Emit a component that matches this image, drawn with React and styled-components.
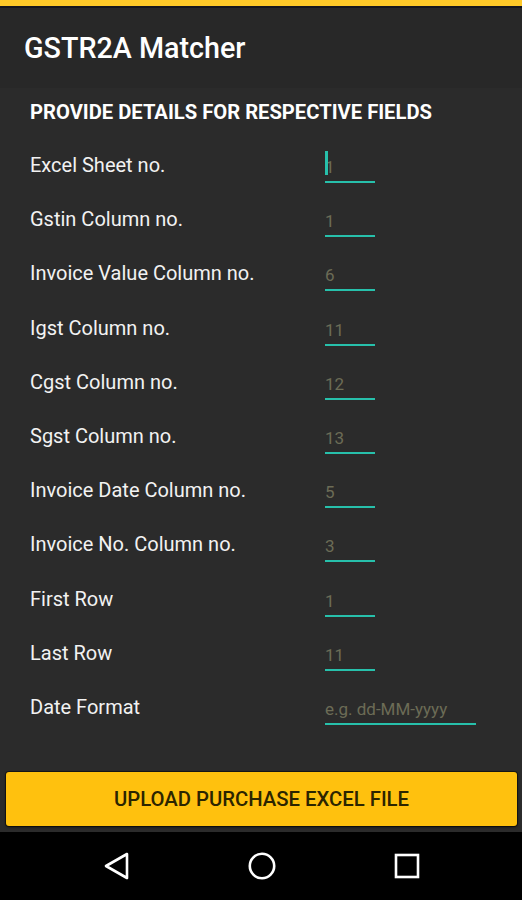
import React from "react";
import styled, { createGlobalStyle } from "styled-components";

const Global = createGlobalStyle`
  html, body { margin: 0; padding: 0; background: #2b2b2b; }
  * { box-sizing: border-box; }
  body { font-family: Roboto, "Noto Sans", "Liberation Sans", sans-serif; }
`;

const Screen = styled.div`
  width: 522px;
  height: 900px;
  display: flex;
  flex-direction: column;
  background: #2b2b2b;
  overflow: hidden;
`;

const StatusBar = styled.div`
  height: 8px;
  flex: none;
  background: #ffc928;
  border-bottom: 2px solid #16161c;
`;

const AppBar = styled.header`
  height: 80px;
  flex: none;
  display: flex;
  align-items: center;
  padding-left: 24px;
  background: #282828;
`;

const Title = styled.h1`
  margin: 0;
  font-size: 28.7px;
  font-weight: 500;
  color: #ffffff;
  letter-spacing: 0;
`;

const Content = styled.main`
  flex: 1;
  padding: 12px 30px 0 30px;
`;

const Heading = styled.h2`
  margin: 0 0 14px 0;
  height: 24px;
  line-height: 24px;
  font-size: 20.2px;
  font-weight: 700;
  color: #ffffff;
`;

const Row = styled.div`
  height: 54.2px;
  display: flex;
  align-items: center;
`;

const Label = styled.div`
  width: 295px;
  flex: none;
  font-size: 20px;
  color: #f2f2f2;
`;

const FieldWrap = styled.div`
  position: relative;
  margin-top: 6px;
`;

const Field = styled.input`
  display: block;
  width: ${(p) => (p.$wide ? 151 : 50)}px;
  height: 30px;
  padding: 2px 0 2px 0;
  margin: 0;
  border: none;
  border-bottom: 2px solid #27c0ab;
  background: transparent;
  outline: none;
  font-family: Roboto, "Noto Sans", "Liberation Sans", sans-serif;
  font-size: 17px;
  color: #6c6c56;
  &::placeholder { color: #6c6c56; opacity: 1; }
`;

const Caret = styled.span`
  position: absolute;
  left: 0;
  top: -2px;
  width: 3px;
  height: 24px;
  background: #27c0ab;
`;

const ButtonBar = styled.div`
  flex: none;
  padding: 0 5px 6px 6px;
`;

const UploadButton = styled.button`
  display: block;
  width: 100%;
  height: 54px;
  border: none;
  border-radius: 3px;
  background: #ffc10e;
  box-shadow: 0 0 0 1px rgba(0, 0, 0, 0.45), 0 1px 3px rgba(0, 0, 0, 0.6);
  font-family: Roboto, "Noto Sans", "Liberation Sans", sans-serif;
  font-size: 20.3px;
  font-weight: 500;
  color: #2c2500;
  text-transform: uppercase;
`;

const NavBar = styled.nav`
  height: 68px;
  flex: none;
  background: #000000;
  display: flex;
  align-items: center;
  justify-content: space-between;
  padding: 0 100px 0 102px;
`;

const NavIcon = styled.svg`
  width: 30px;
  height: 30px;
  display: block;
`;

const fields = [
  { label: "Excel Sheet no.", value: "1", caret: true },
  { label: "Gstin Column no.", value: "1" },
  { label: "Invoice Value Column no.", value: "6" },
  { label: "Igst Column no.", value: "11" },
  { label: "Cgst Column no.", value: "12" },
  { label: "Sgst Column no.", value: "13" },
  { label: "Invoice Date Column no.", value: "5" },
  { label: "Invoice No. Column no.", value: "3" },
  { label: "First Row", value: "1" },
  { label: "Last Row", value: "11" },
];

export default function App() {
  return (
    <Screen>
      <Global />
      <StatusBar />
      <AppBar>
        <Title>GSTR2A Matcher</Title>
      </AppBar>
      <Content>
        <Heading>PROVIDE DETAILS FOR RESPECTIVE FIELDS</Heading>
        {fields.map((f) => (
          <Row key={f.label}>
            <Label>{f.label}</Label>
            <FieldWrap>
              <Field readOnly defaultValue={f.value} />
              {f.caret && <Caret />}
            </FieldWrap>
          </Row>
        ))}
        <Row>
          <Label>Date Format</Label>
          <FieldWrap>
            <Field $wide readOnly placeholder="e.g. dd-MM-yyyy" />
          </FieldWrap>
        </Row>
      </Content>
      <ButtonBar>
        <UploadButton>Upload Purchase Excel File</UploadButton>
      </ButtonBar>
      <NavBar>
        <NavIcon viewBox="0 0 30 30">
          <path d="M25 3 L4 15 L25 27 Z" fill="none" stroke="#fff" strokeWidth="2.6" strokeLinejoin="round" />
        </NavIcon>
        <NavIcon viewBox="0 0 30 30">
          <circle cx="15" cy="15" r="12.2" fill="none" stroke="#fff" strokeWidth="2.6" />
        </NavIcon>
        <NavIcon viewBox="0 0 30 30">
          <rect x="4" y="4" width="22" height="22" fill="none" stroke="#fff" strokeWidth="2.6" />
        </NavIcon>
      </NavBar>
    </Screen>
  );
}
